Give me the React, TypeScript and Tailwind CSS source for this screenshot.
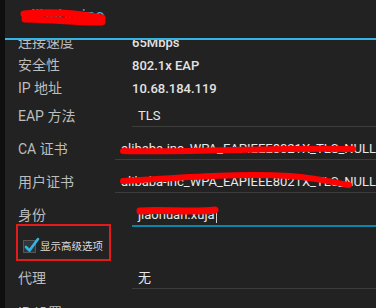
const font = { fontFamily: '"Roboto", "Noto Sans CJK SC", sans-serif' };

const infoRows = [
  { label: "连接速度", value: "65Mbps" },
  { label: "安全性", value: "802.1x EAP" },
  { label: "IP 地址", value: "10.68.184.119" },
];

function Scribble({ d, w = 6 }: { d: string; w?: number }) {
  return (
    <svg className="absolute inset-0 w-full h-full overflow-visible pointer-events-none" fill="none">
      <path d={d} stroke="#ff0000" strokeWidth={w} strokeLinecap="round" strokeLinejoin="round" />
    </svg>
  );
}

function EditRow({
  label,
  value,
  scribble,
  active,
  className = "",
}: {
  label: string;
  value: string;
  scribble?: string;
  active?: boolean;
  className?: string;
}) {
  return (
    <div className={`flex ${className}`}>
      <div className="w-[114px] h-[20px] flex items-center text-[14px] text-[#bdbdbd]">{label}</div>
      <div className="flex-1 flex flex-col">
        <div className="relative h-[20px] flex items-center pl-[6px] text-[13px] text-[#e8e8e8] whitespace-nowrap overflow-visible">
          <span>{value}</span>
          {active && <span className="w-px h-[16px] bg-[#d0d0d0] ml-px" />}
          {scribble && <Scribble d={scribble} w={active ? 7 : 6} />}
        </div>
        <div className={active ? "h-[2px] bg-[#0a86ad]" : "h-px bg-[#3c3c3c]"} />
      </div>
    </div>
  );
}

export default function App() {
  return (
    <div className="w-[376px] h-[308px] flex bg-[#0e0e0e] overflow-hidden" style={font}>
      <div className="w-[5px] shrink-0" />
      <div className="flex-1 flex flex-col bg-[#222222] overflow-hidden">
        {/* title */}
        <div className="relative h-[38px] shrink-0 flex items-start pl-[17px] pt-[3px]">
          <span className="text-[17px] text-[#33b5e5]">alibaba-inc</span>
          <Scribble d="M19 14 C45 11, 75 14, 97 18 M20 19 C50 19, 75 23, 97 22" w={7} />
        </div>
        <div className="h-[2px] shrink-0 bg-[#33b5e5]" />

        <div className="flex-1 overflow-hidden pl-[13px]">
          <div className="-mt-[9px]">
            {infoRows.map((r, i) => (
              <div key={i} className="flex h-[23px] items-center">
                <div className="w-[114px] text-[14px] text-[#bdbdbd]">{r.label}</div>
                <div className="text-[13px] font-medium text-[#e3e3e3]">{r.value}</div>
              </div>
            ))}

            <EditRow className="mt-[6px]" label="EAP 方法" value="TLS" />
            <EditRow
              className="mt-[12px]"
              label="CA 证书"
              value="alibaba-inc_WPA_EAPIEEE8021X_TLS_NULL"
              scribble="M8 12 C80 14, 160 8, 238 10"
            />
            <EditRow
              className="mt-[12px]"
              label="用户证书"
              value="alibaba-inc_WPA_EAPIEEE8021X_TLS_NULL"
              scribble="M8 9 C60 6, 120 1, 175 4 C205 6, 225 12, 234 13"
            />
            <EditRow
              className="mt-[12px]"
              label="身份"
              value="jiaohuan.xuja"
              scribble="M8 6 C30 4, 60 8, 83 5"
              active
            />

            {/* advanced options checkbox */}
            <div className="-mt-[3px] ml-[-2px] w-[95px] h-[37px] border-2 border-[#e31b1b] flex items-center gap-[4px] pl-[5px] pt-[8px]">
              <div className="relative w-[13px] h-[13px] bg-[#2f3538] border border-[#555]">
                <svg className="absolute -left-[1px] -top-[4px] w-[17px] h-[17px] overflow-visible" viewBox="0 0 17 17" fill="none">
                  <path d="M3 10 L6.5 13.5 L15 2" stroke="#33b5e5" strokeWidth="2.6" strokeLinecap="round" strokeLinejoin="round" />
                </svg>
              </div>
              <span className="text-[10.5px] text-[#dcdcdc]">显示高级选项</span>
            </div>

            <EditRow className="mt-[7px]" label="代理" value="无" />

            <div className="flex mt-[14px] h-[20px] items-center">
              <div className="w-[114px] text-[14px] text-[#bdbdbd]">IP 设置</div>
              <div className="pl-[6px] text-[13px] text-[#e8e8e8]">DHCP</div>
            </div>
          </div>
        </div>
      </div>
    </div>
  );
}
